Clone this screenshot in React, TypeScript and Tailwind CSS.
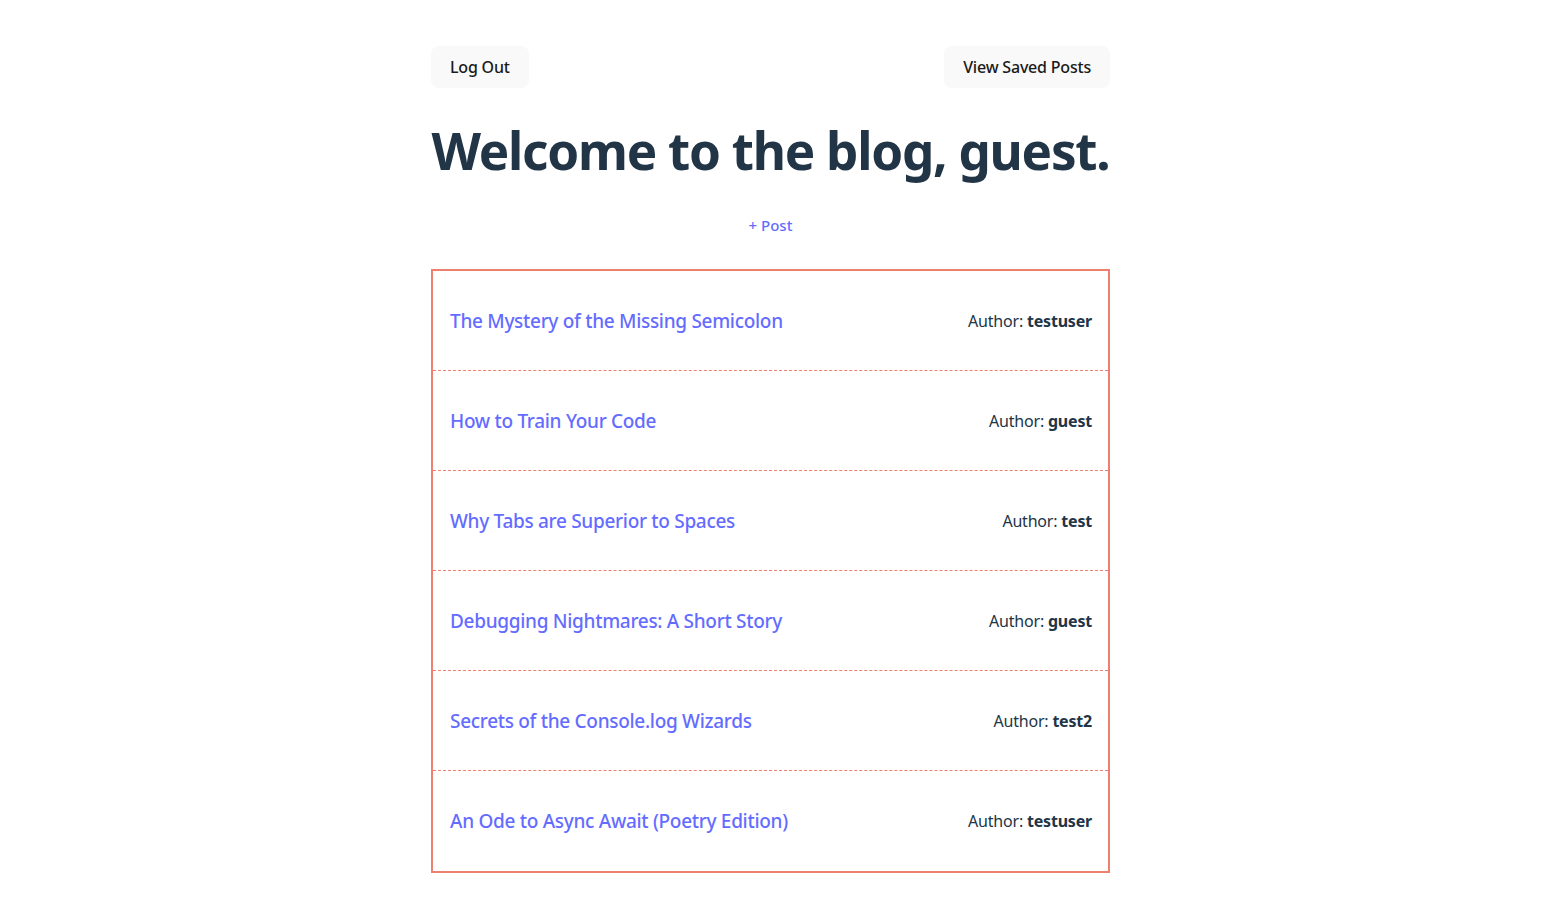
const posts = [
  { title: 'The Mystery of the Missing Semicolon', author: 'testuser' },
  { title: 'How to Train Your Code', author: 'guest' },
  { title: 'Why Tabs are Superior to Spaces', author: 'test' },
  { title: 'Debugging Nightmares: A Short Story', author: 'guest' },
  { title: 'Secrets of the Console.log Wizards', author: 'test2' },
  { title: 'An Ode to Async Await (Poetry Edition)', author: 'testuser' },
];

export default function App() {
  return (
    <div className="min-h-screen bg-white pt-[46px] font-['Noto_Sans',sans-serif] text-[#213547]">
      <div className="mx-auto w-[679px]">
        <div className="flex items-center justify-between">
          <button className="h-[42px] rounded-lg bg-[#f9f9f9] px-[19px] text-[16px] font-medium tracking-[-0.2px] text-[#1a1a1a]">Log Out</button>
          <button className="h-[42px] rounded-lg bg-[#f9f9f9] px-[19px] text-[16px] font-medium tracking-[-0.2px] text-[#1a1a1a]">View Saved Posts</button>
        </div>

        <h1 className="mt-[34px] whitespace-nowrap text-center text-[51.2px] font-bold leading-[1.1] tracking-[-1.25px]">Welcome to the blog, guest.</h1>

        <div className="mt-[35px] text-center">
          <a className="text-[15px] font-medium text-[#646cff]">+ Post</a>
        </div>

        <ul className="mt-[32px] border-2 border-[#ee8070]">
          {posts.map((p, i) => (
            <li
              key={p.title}
              className={`flex h-[100px] items-center justify-between pl-[17px] pr-[16px] ${i < posts.length - 1 ? 'border-b border-dashed border-[#ee8070]' : ''}`}
            >
              <a className="text-[19px] font-medium tracking-[-0.3px] text-[#646cff]">{p.title}</a>
              <span className="text-[16px] tracking-[-0.2px]">
                Author: <span className="font-bold">{p.author}</span>
              </span>
            </li>
          ))}
        </ul>
      </div>
    </div>
  );
}
